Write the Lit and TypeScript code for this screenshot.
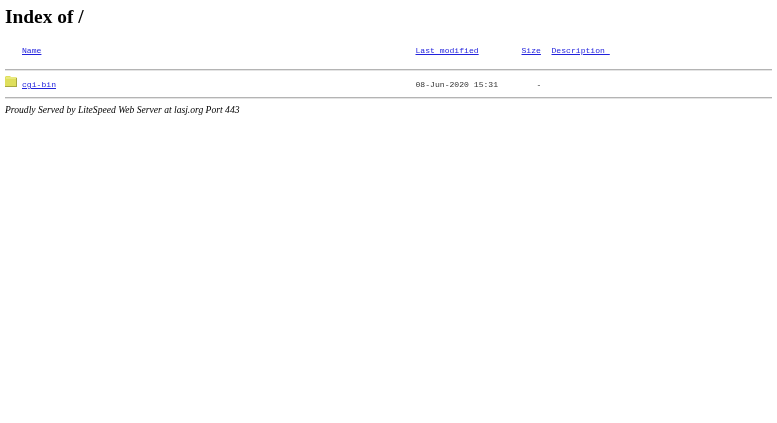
import { LitElement, html, css } from "lit";
import { customElement } from "lit/decorators.js";

@customElement("app-root")
export class AppRoot extends LitElement {
  static styles = css`
    :host { display: block; background: #fff; min-height: 423px; color: #000; font-family: "Liberation Serif", serif; padding: 0 5px; box-sizing: border-box; overflow: hidden; filter: blur(0.3px); }
    h1 { margin: 0; padding-top: 6px; font-size: 19.4px; line-height: 22px; font-weight: bold; }
    .row { display: grid; grid-template-columns: 17px 393.5px 106px 30px 1fr; font-family: "Liberation Mono", monospace; font-size: 8.1px; line-height: 10px; white-space: pre; color: #333; }
    .head { margin-top: 18px; padding-bottom: 13px; }
    .item { padding: 5px 0 7px; align-items: start; }
    .item span { padding-top: 5px; }
    a { color: #2222dd; text-decoration: underline; }
    .item .size { padding-left: 15px; }
    hr { margin: 0; height: 1px; border: 0; background: #b4b4b4; box-shadow: 0 1px 0 #e4e4e4; }
    address { font-size: 9.6px; line-height: 12px; margin-top: 6px; font-style: italic; color: #000; }
    svg { display: block; }
  `;
  render() {
    return html`
      <h1>Index of /</h1>
      <div class="row head">
        <span></span><span><a href="#">Name</a></span><span><a href="#">Last modified</a></span><span><a href="#">Size</a></span><span><a href="#">Description </a></span>
      </div>
      <hr />
      <div class="row item">
        <svg width="13" height="12" viewBox="0 0 13 12">
          <path d="M0 2 L1 1 L5 1 L6 2 L11 2 L12 3 L12 12 L0 12 Z" fill="#dfdf5c" />
          <path d="M1 3 L11.5 3" stroke="#f2f2a0" stroke-width="1" />
          <path d="M0 11.5 L12 11.5 M11.5 3 L11.5 12" stroke="#a8a840" stroke-width="1" />
        </svg>
        <span><a href="#">cgi-bin</a></span><span>08-Jun-2020 15:31</span><span class="size">-</span><span></span>
      </div>
      <hr />
      <address>Proudly Served by LiteSpeed Web Server at lasj.org Port 443</address>
    `;
  }
}
